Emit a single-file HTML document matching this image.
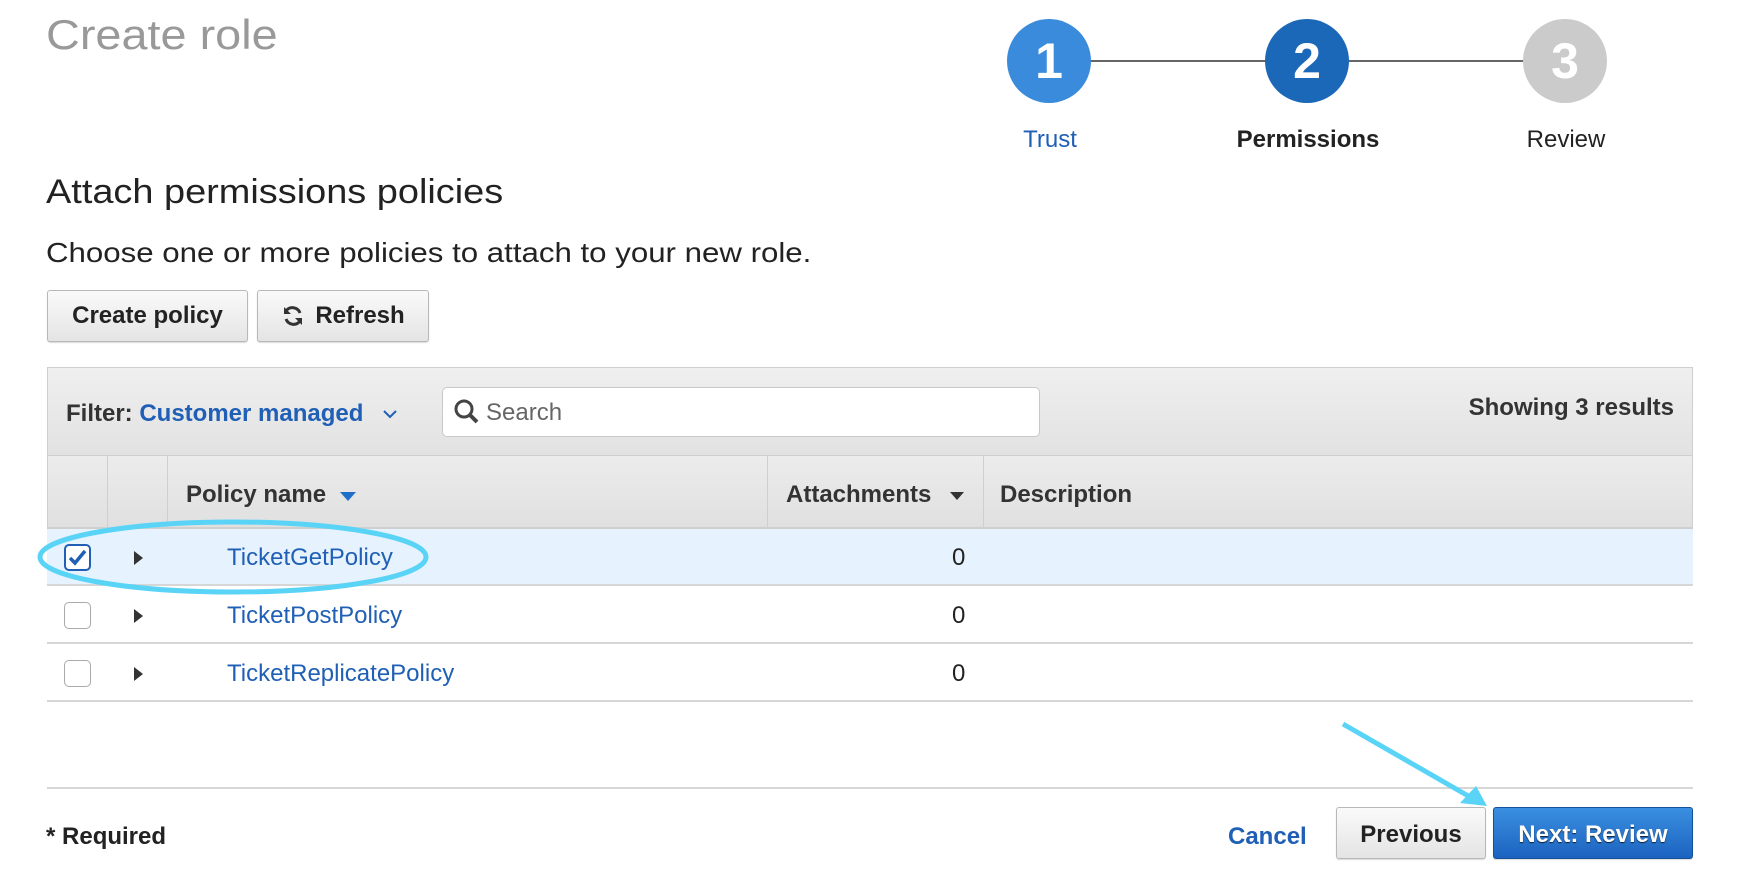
<!DOCTYPE html>
<html><head><style>
*{box-sizing:border-box;margin:0;padding:0}
body{width:1738px;height:884px;background:#fff;font-family:"Liberation Sans",Arial,sans-serif;position:relative;overflow:hidden;color:#222}
.a{position:absolute;white-space:nowrap}
.sx{transform-origin:left top;transform:scaleX(1.115)}
.btn{position:absolute;border:1px solid #b8b8b8;border-radius:3px;background:linear-gradient(#fafafa,#e4e4e4);font-weight:bold;font-size:24px;color:#222;display:flex;align-items:center;justify-content:center;box-shadow:0 1px 1px rgba(0,0,0,.15)}
.circ{position:absolute;width:84px;height:84px;border-radius:50%;color:#fff;font-weight:bold;font-size:50px;display:flex;align-items:center;justify-content:center;top:19px}
.lbl{position:absolute;top:126px;font-size:24px;transform:translateX(-50%)}
.cb{position:absolute;left:64px;width:27px;height:27px;border:1px solid #aaa;border-radius:5px;background:#fff}
.tri{position:absolute;left:134px;width:0;height:0;border-top:7px solid transparent;border-bottom:7px solid transparent;border-left:9px solid #333}
.pn{position:absolute;left:227px;font-size:24px;color:#1f5fb5}
.z{position:absolute;left:952px;font-size:24px}
</style></head><body>
<div class="a sx" style="left:46px;top:11px;font-size:42px;color:#999">Create role</div>

<div class="a" style="left:1090px;top:60px;width:440px;height:2px;background:#666"></div>
<div class="circ" style="left:1007px;background:#3a8bdb">1</div>
<div class="circ" style="left:1265px;background:#1b67b8">2</div>
<div class="circ" style="left:1523px;background:#cbcbcb">3</div>
<div class="lbl" style="left:1050px;color:#1f5fb5">Trust</div>
<div class="lbl" style="left:1308px;font-weight:bold;color:#222">Permissions</div>
<div class="lbl" style="left:1566px;color:#222">Review</div>

<div class="a sx" style="left:46px;top:173px;font-size:34px;color:#222">Attach permissions policies</div>
<div class="a sx" style="left:46px;top:237px;font-size:28px;color:#222">Choose one or more policies to attach to your new role.</div>

<div class="btn" style="left:47px;top:290px;width:201px;height:52px">Create policy</div>
<div class="btn" style="left:257px;top:290px;width:172px;height:52px"><svg width="24" height="24" viewBox="0 0 24 24" style="margin-right:10px"><path d="M19 9A8 8 0 0 0 5 7M5 15a8 8 0 0 0 14 2" fill="none" stroke="#333" stroke-width="3"/><path d="M3 3v7h7z M21 21v-7h-7z" fill="#333"/></svg>Refresh</div>

<div class="a" style="left:47px;top:367px;width:1646px;height:90px;background:linear-gradient(#efefef,#e2e2e2);border:1px solid #cfcfcf;border-bottom:2px solid #cfcfcf"></div>
<div class="a" style="left:66px;top:400px;font-size:24px;font-weight:bold;color:#333">Filter: <span style="color:#1f5fb5">Customer managed</span></div>
<svg class="a" style="left:382px;top:408px" width="16" height="12"><path d="M2 3l6 6 6-6" fill="none" stroke="#1f5fb5" stroke-width="2"/></svg>
<div class="a" style="left:442px;top:387px;width:598px;height:50px;background:#fff;border:1px solid #c8c8c8;border-radius:5px"></div>
<svg class="a" style="left:453px;top:398px" width="28" height="28"><circle cx="11" cy="11" r="8" fill="none" stroke="#444" stroke-width="3"/><path d="M17 17l7 7" stroke="#444" stroke-width="4"/></svg>
<div class="a" style="left:486px;top:399px;font-size:24px;color:#666">Search</div>
<div class="a" style="right:64px;top:394px;font-size:24px;font-weight:bold;color:#333">Showing 3 results</div>

<div class="a" style="left:47px;top:456px;width:1646px;height:73px;background:linear-gradient(#ececec,#e0e0e0);border-left:1px solid #cfcfcf;border-right:1px solid #cfcfcf;border-bottom:2px solid #cfcfcf"></div>
<div class="a" style="left:107px;top:456px;width:1px;height:72px;background:#cfcfcf"></div>
<div class="a" style="left:167px;top:456px;width:1px;height:72px;background:#cfcfcf"></div>
<div class="a" style="left:767px;top:456px;width:1px;height:72px;background:#cfcfcf"></div>
<div class="a" style="left:983px;top:456px;width:1px;height:72px;background:#cfcfcf"></div>
<div class="a" style="left:186px;top:481px;font-size:24px;font-weight:bold;color:#333">Policy name</div>
<div class="a" style="left:340px;top:492px;border-left:8px solid transparent;border-right:8px solid transparent;border-top:9px solid #1f6fc9"></div>
<div class="a" style="left:786px;top:481px;font-size:24px;font-weight:bold;color:#333">Attachments</div>
<div class="a" style="left:950px;top:492px;border-left:7px solid transparent;border-right:7px solid transparent;border-top:8px solid #333"></div>
<div class="a" style="left:1000px;top:481px;font-size:24px;font-weight:bold;color:#333">Description</div>

<div class="a" style="left:47px;top:529px;width:1646px;height:57px;background:#e6f2fd;border-bottom:2px solid #d6d6d6"></div>
<div class="a" style="left:47px;top:586px;width:1646px;height:58px;border-bottom:2px solid #d6d6d6"></div>
<div class="a" style="left:47px;top:644px;width:1646px;height:58px;border-bottom:2px solid #d6d6d6"></div>

<div class="cb" style="top:544px;border:2px solid #1f5fb5"><svg width="23" height="23"><path d="M4 12l5 5 10-12" fill="none" stroke="#1f5fb5" stroke-width="3.5"/></svg></div>
<div class="cb" style="top:602px"></div>
<div class="cb" style="top:660px"></div>
<div class="tri" style="top:551px"></div>
<div class="tri" style="top:609px"></div>
<div class="tri" style="top:667px"></div>
<div class="pn" style="top:544px">TicketGetPolicy</div>
<div class="pn" style="top:602px">TicketPostPolicy</div>
<div class="pn" style="top:660px">TicketReplicatePolicy</div>
<div class="z" style="top:544px">0</div>
<div class="z" style="top:602px">0</div>
<div class="z" style="top:660px">0</div>

<div class="a" style="left:47px;top:787px;width:1646px;height:2px;background:#d6d6d6"></div>
<div class="a" style="left:46px;top:823px;font-size:24px;font-weight:bold;color:#222">* Required</div>
<div class="a" style="left:1228px;top:823px;font-size:24px;font-weight:bold;color:#1f5fb5">Cancel</div>
<div class="btn" style="left:1336px;top:807px;width:150px;height:52px;padding-top:3px">Previous</div>
<div class="btn" style="left:1493px;top:807px;width:200px;height:52px;padding-top:3px;background:linear-gradient(#3a8fe0,#1c63c0);border-color:#15509a;color:#fff;text-shadow:0 1px 1px #123">Next: Review</div>

<svg class="a" style="left:0;top:0" width="1738" height="884">
<ellipse cx="233" cy="557" rx="193" ry="35" fill="none" stroke="#5ad4f6" stroke-width="5"/>
<line x1="1343" y1="724" x2="1470" y2="797" stroke="#5ad4f6" stroke-width="5"/>
<path d="M1487 806 L1460 803 L1476 786 Z" fill="#5ad4f6"/>
</svg>
</body></html>
